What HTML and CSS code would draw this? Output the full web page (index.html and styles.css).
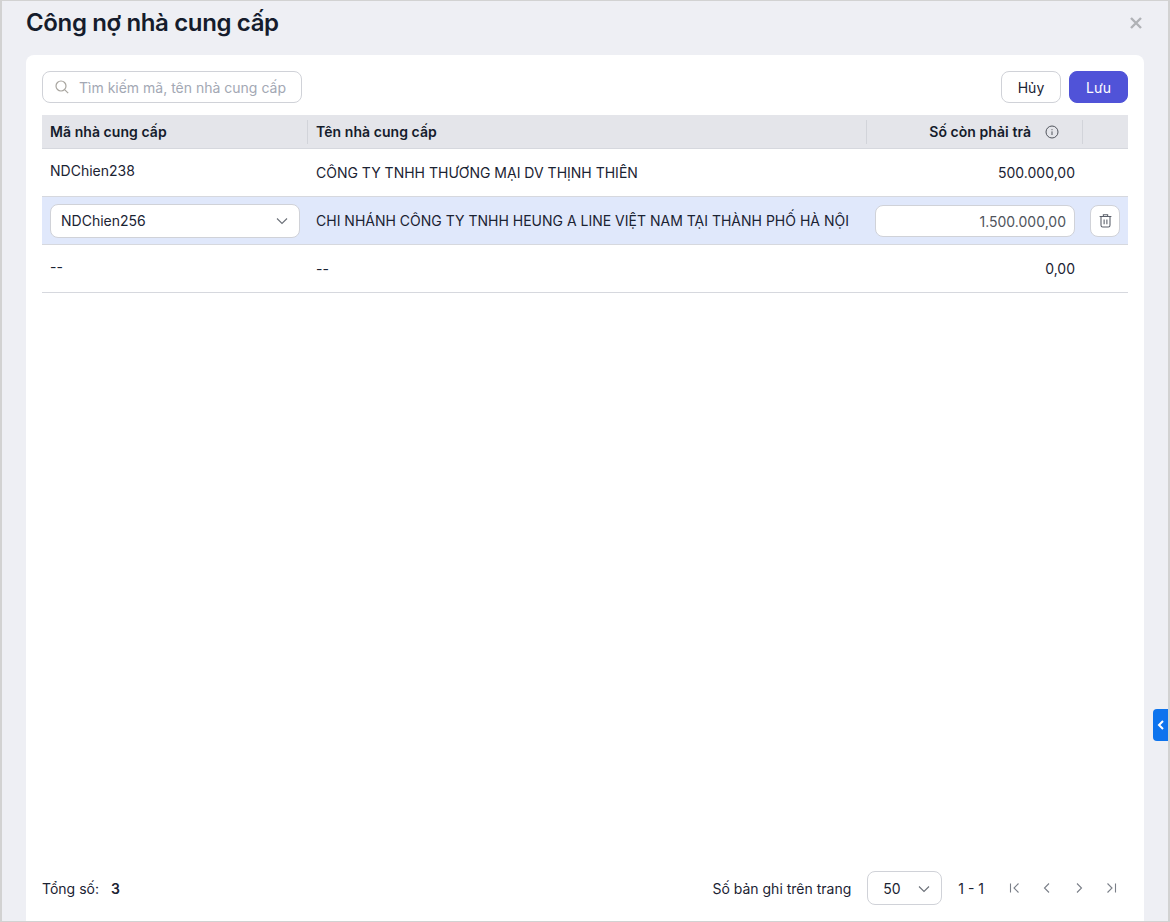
FILE: index.html
```html
<!DOCTYPE html>
<html lang="vi">
<head>
<meta charset="utf-8">
<title>Công nợ nhà cung cấp</title>
<link rel="stylesheet" href="styles.css">
</head>
<body>
<div class="modal">
  <header class="modal-head">
    <h1 class="title">Công nợ nhà cung cấp</h1>
    <svg class="close" width="12" height="12" viewBox="0 0 12 12"><path d="M1 1l10 10M11 1L1 11" stroke="#b0b2b6" stroke-width="2.4" fill="none"/></svg>
  </header>
  <main class="card">
    <div class="toolbar">
      <div class="search">
        <svg width="16" height="16" viewBox="0 0 16 16" fill="none" stroke="#a8a59f" stroke-width="1.2"><circle cx="7" cy="7" r="5"/><path d="M10.8 10.8l3.4 3.4"/></svg>
        <span class="placeholder">Tìm kiếm mã, tên nhà cung cấp</span>
      </div>
      <div class="actions">
        <button class="btn btn-ghost">Hủy</button>
        <button class="btn btn-primary">Lưu</button>
      </div>
    </div>
    <div class="table">
      <div class="row head">
        <div class="cell c1"><span>Mã nhà cung cấp</span></div>
        <div class="cell c2 sep"><span>Tên nhà cung cấp</span></div>
        <div class="cell c3 sep right">
          <span>Số còn phải trả</span>
          <svg class="info" width="14" height="14" viewBox="0 0 14 14" fill="none" stroke="#50545c" stroke-width="1"><circle cx="7" cy="7" r="6"/><path d="M7 6.4v3.6M7 4.2v1"/></svg>
        </div>
        <div class="cell c4 sep"></div>
      </div>
      <div class="row">
        <div class="cell c1"><span class="up">NDChien238</span></div>
        <div class="cell c2">CÔNG TY TNHH THƯƠNG MẠI DV THỊNH THIÊN</div>
        <div class="cell c3 right">500.000,00</div>
        <div class="cell c4"></div>
      </div>
      <div class="row active">
        <div class="cell c1">
          <div class="select">
            <span>NDChien256</span>
            <svg width="12" height="12" viewBox="0 0 12 12" fill="none" stroke="#6b7078" stroke-width="1.1"><path d="M1 3.500L6 8.500l5-5"/></svg>
          </div>
        </div>
        <div class="cell c2">CHI NHÁNH CÔNG TY TNHH HEUNG A LINE VIỆT NAM TẠI THÀNH PHỐ HÀ NỘI</div>
        <div class="cell c3 right"><div class="amount">1.500.000,00</div></div>
        <div class="cell c4">
          <button class="trash">
            <svg width="15" height="15" viewBox="0 0 14 14" fill="none" stroke="#5a5f6a" stroke-width="1"><path d="M1.500 3.300h11M5 3.200V1.600h4v1.600M2.800 3.400v8a1.600 1.600 0 0 0 1.600 1.600h5.200a1.600 1.600 0 0 0 1.600-1.600v-8M5.700 6v4.400M8.300 6v4.400"/></svg>
          </button>
        </div>
      </div>
      <div class="row">
        <div class="cell c1"><span class="up">--</span></div>
        <div class="cell c2">--</div>
        <div class="cell c3 right">0,00</div>
        <div class="cell c4"></div>
      </div>
    </div>
    <footer class="pager">
      <div class="total">Tổng số:<b>3</b></div>
      <div class="pager-right">
        <span>Số bản ghi trên trang</span>
        <div class="size">
          <span>50</span>
          <svg width="12" height="12" viewBox="0 0 12 12" fill="none" stroke="#6b7078" stroke-width="1.1"><path d="M1 3.500L6 8.500l5-5"/></svg>
        </div>
        <span class="range">1 - 1</span>
        <div class="nav">
          <svg width="12" height="12" viewBox="0 0 12 12" fill="none" stroke="#7a7f88" stroke-width="1.1"><path d="M1.500 1.500v9M9.500 1.500L5 6l4.500 4.500"/></svg>
          <svg width="12" height="12" viewBox="0 0 12 12" fill="none" stroke="#7a7f88" stroke-width="1.1"><path d="M8 1.500L3.500 6 8 10.500"/></svg>
          <svg width="12" height="12" viewBox="0 0 12 12" fill="none" stroke="#7a7f88" stroke-width="1.1"><path d="M4 1.500L8.500 6 4 10.500"/></svg>
          <svg width="12" height="12" viewBox="0 0 12 12" fill="none" stroke="#7a7f88" stroke-width="1.1"><path d="M2.500 1.500L7 6l-4.500 4.500M10.500 1.500v9"/></svg>
        </div>
      </div>
    </footer>
  </main>
  <div class="side-tab">
    <svg width="8" height="10" viewBox="0 0 8 10" fill="none" stroke="#fff" stroke-width="2"><path d="M6 1L2 5l4 4"/></svg>
  </div>
</div>
</body>
</html>
```
FILE: styles.css
```css
* { box-sizing: border-box; }
html, body { margin: 0; padding: 0; }
body {
  font-family: Inter, "Noto Sans", sans-serif;
  font-size: 14px;
  line-height: 20px;
  color: #1b2333;
}
.modal {
  position: relative;
  width: 1170px;
  height: 922px;
  background: #eeeff4;
  border: 1px solid #d2d2d2;
  border-left-width: 2px;
  border-right-width: 2px;
  padding: 0 24px;
  display: flex;
  flex-direction: column;
  overflow: hidden;
}
.modal-head {
  height: 54px;
  display: flex;
  align-items: flex-start;
  justify-content: space-between;
  flex: none;
}
.title {
  margin: 6px 0 0;
  font-size: 24px;
  line-height: 32px;
  font-weight: 600;
  letter-spacing: -0.36px;
  color: #151c2c;
}
.close { margin: 16px 2px 0 0; }
.card {
  flex: 1;
  background: #fff;
  border-radius: 8px 8px 0 0;
  padding: 16px;
  display: flex;
  flex-direction: column;
}
.toolbar {
  display: flex;
  justify-content: space-between;
  height: 32px;
  margin-bottom: 12px;
}
.search {
  width: 260px;
  height: 32px;
  border: 1px solid #d0d2d8;
  border-radius: 8px;
  display: flex;
  align-items: center;
  gap: 9px;
  padding: 0 11px;
}
.placeholder { color: #a3a8b4; padding-top: 1px; }
.actions { display: flex; gap: 8px; }
.btn {
  height: 32px;
  border-radius: 8px;
  font: inherit;
  padding: 1px 0 0;
}
.btn-ghost {
  width: 60px;
  background: #fff;
  border: 1px solid #d0d2d8;
  color: #1b2333;
}
.btn-primary {
  width: 59px;
  background: #5053d8;
  border: 1px solid #5053d8;
  color: #fff;
}
.table { display: flex; flex-direction: column; }
.row {
  display: grid;
  grid-template-columns: 266px 559px 216px 45px;
  height: 48px;
  border-bottom: 1px solid #d6d8de;
  align-items: center;
}
.row.head {
  grid-template-columns: 265px 559px 216px 46px;
  height: 34px;
  background: #e4e5ea;
  font-weight: 600;
  letter-spacing: 0.06px;
  color: #151c2c;
  border-bottom-color: #d6d8de;
}
.row.active { background: #e0e8fb; }
.cell {
  padding: 0 8px;
  min-width: 0;
  white-space: nowrap;
}
.head .sep { border-left: 1px solid #d2d4da; height: 24px; line-height: 24px; }
.right {
  display: flex;
  justify-content: flex-end;
  align-items: center;
}
.head .right { padding-right: 23px; }
.info { margin-left: 14px; }
.up { position: relative; top: -2px; }
.select {
  width: 250px;
  height: 34px;
  background: #fff;
  border: 1px solid #d0d2d8;
  border-radius: 8px;
  display: flex;
  align-items: center;
  justify-content: space-between;
  padding: 1px 11px 0 10px;
}
.amount {
  width: 200px;
  height: 32px;
  background: #fff;
  border: 1px solid #d0d2d8;
  border-radius: 8px;
  text-align: right;
  line-height: 32px;
  padding: 0 8px;
  color: #50545c;
}
.trash {
  width: 30px;
  height: 32px;
  padding: 0;
  background: #fff;
  border: 1px solid #d0d2d8;
  border-radius: 8px;
  display: flex;
  align-items: center;
  justify-content: center;
  margin-left: -1px;
}
.pager {
  margin-top: auto;
  display: flex;
  justify-content: space-between;
  align-items: center;
  height: 34px;
  padding-top: 1px;
}
.total b { font-weight: 600; margin-left: 12px; }
.pager-right { display: flex; align-items: center; margin-top: -1px; margin-right: 11px; }
.pager-right > span { padding-top: 1px; }
.size {
  width: 75px;
  height: 34px;
  margin-left: 16px;
  border: 1px solid #d0d2d8;
  border-radius: 8px;
  display: flex;
  align-items: center;
  justify-content: space-between;
  padding: 1px 11px 0 15px;
}
.range { margin-left: 16px; }
.nav {
  display: flex;
  gap: 20px;
  margin-left: 25px;
}
.side-tab {
  position: absolute;
  right: -1px;
  top: 708px;
  width: 16px;
  height: 32px;
  background: #0d74ee;
  border-radius: 4px 0 0 4px;
  display: flex;
  align-items: center;
  justify-content: center;
}
```
